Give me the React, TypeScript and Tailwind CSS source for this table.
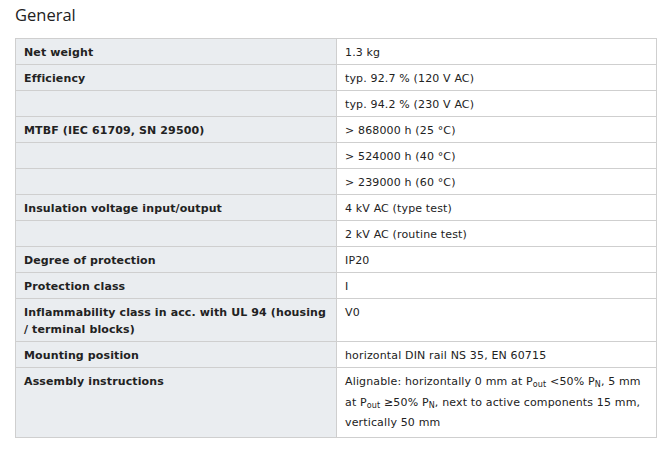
import React from "react";

type Row = { label?: React.ReactNode; value: React.ReactNode; tall?: boolean };

const rows: Row[] = [
  { label: "Net weight", value: "1.3 kg" },
  { label: "Efficiency", value: "typ. 92.7 % (120 V AC)" },
  { label: "", value: "typ. 94.2 % (230 V AC)" },
  { label: "MTBF (IEC 61709, SN 29500)", value: "> 868000 h (25 °C)" },
  { label: "", value: "> 524000 h (40 °C)" },
  { label: "", value: "> 239000 h (60 °C)" },
  { label: "Insulation voltage input/output", value: "4 kV AC (type test)" },
  { label: "", value: "2 kV AC (routine test)" },
  { label: "Degree of protection", value: "IP20" },
  { label: "Protection class", value: "I" },
  {
    label: (
      <>
        Inflammability class in acc. with UL 94 (housing
        <br />/ terminal blocks)
      </>
    ),
    value: "V0",
  },
  { label: "Mounting position", value: "horizontal DIN rail NS 35, EN 60715" },
  {
    label: "Assembly instructions",
    tall: true,
    value: (
      <>
        Alignable: horizontally 0 mm at P<sub className="text-[8px]">out</sub> &lt;50% P
        <sub className="text-[8px]">N</sub>, 5 mm
        <br />
        at P<sub className="text-[8px]">out</sub> ≥50% P
        <sub className="text-[8px]">N</sub>, next to active components 15 mm,
        <br />
        vertically 50 mm
      </>
    ),
  },
];

export default function App() {
  return (
    <div className="w-[671px] h-[457px] bg-white text-[#222]">
      <div
        className="pl-[15px] pt-[4px] text-[16.5px] leading-[22px] text-[#222]"
        style={{ fontFamily: '"Open Sans", sans-serif' }}
      >
        General
      </div>
      <div
        className="mt-[12px] ml-[15px] w-[642px] border-l border-t border-[#cfcfcf] grid grid-cols-[321px_320px] text-[11px] leading-[17px]"
        style={{ fontFamily: '"DejaVu Sans", Verdana, sans-serif' }}
      >
        {rows.map((r, i) => (
          <React.Fragment key={i}>
            <div className="bg-[#eaedf0] border-r border-b border-[#cfcfcf] px-[8px] pt-[5px] pb-[3px] font-bold tracking-[0.12px] whitespace-nowrap text-[#222]">
              {r.label}
            </div>
            <div
              className={
                r.tall
                  ? "border-r border-b border-[#cfcfcf] px-[8px] pt-[4px] pb-[3px] leading-[20.5px] tracking-[0.15px] whitespace-nowrap text-[#222]"
                  : "border-r border-b border-[#cfcfcf] px-[8px] pt-[5px] pb-[3px] tracking-[0.15px] whitespace-nowrap text-[#222]"
              }
            >
              {r.value}
            </div>
          </React.Fragment>
        ))}
      </div>
    </div>
  );
}
